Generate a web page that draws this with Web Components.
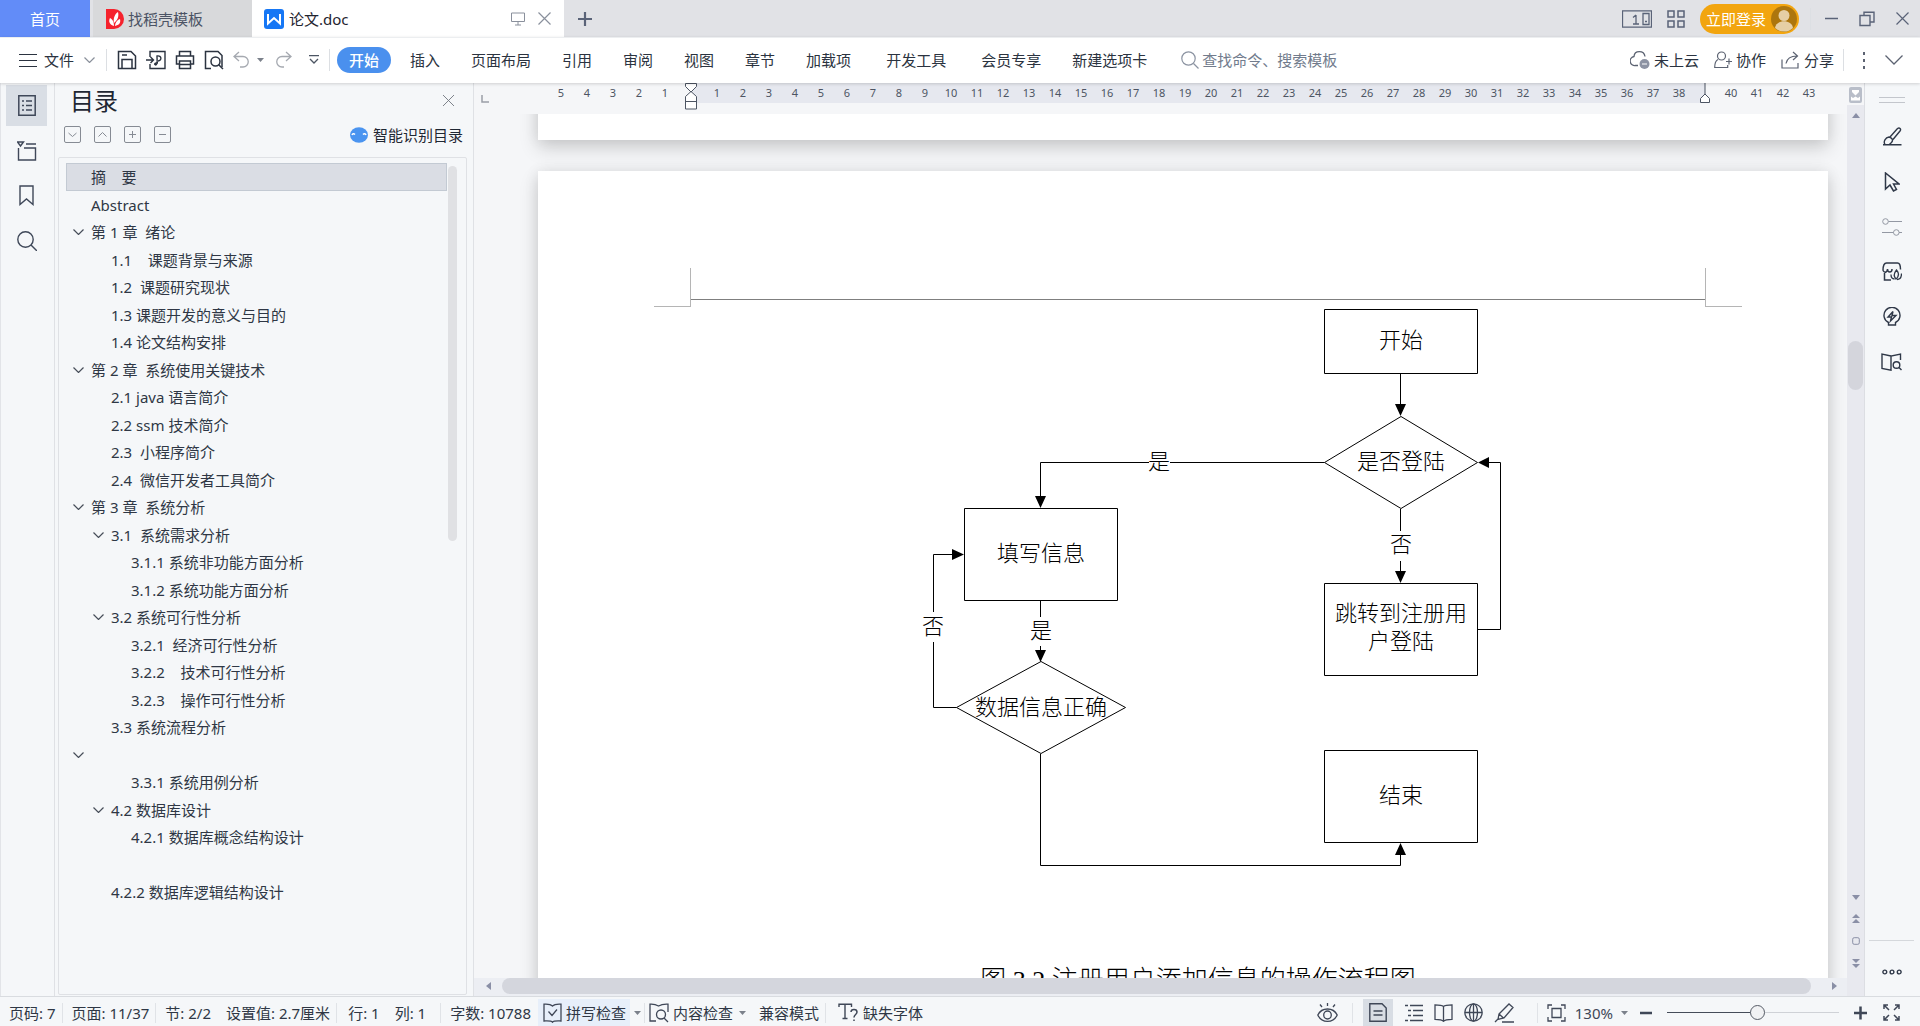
<!DOCTYPE html>
<html lang="zh-CN">
<head>
<meta charset="utf-8">
<title>论文.doc</title>
<style>
html,body{margin:0;height:100%}
body{font-family:"Noto Sans","Noto Sans CJK SC",sans-serif;font-size:15px;line-height:20px;color:#2b3340;background:#f5f7f9;overflow:hidden}
</style>
</head>
<body>
<writer-app></writer-app>
<script>
const base = `*{box-sizing:border-box}
button{all:unset;box-sizing:border-box;display:inline-flex;align-items:center;white-space:nowrap;cursor:pointer}
ui-icon{flex:none}
.sp{flex:1}`;
function define(name, css, html, setup){
  const t = document.createElement('template');
  t.innerHTML = `<style>${base}${css}</style>${html}`;
  customElements.define(name, class extends HTMLElement{
    connectedCallback(){
      if(this.shadowRoot) return;
      this.attachShadow({mode:'open'}).append(t.content.cloneNode(true));
      if(setup) setup(this, this.shadowRoot);
    }
  });
}
/* name: [width, height, drawing] ; strokes follow currentColor */
const icons = {
  docer:[19,20,'<path d="M1 0h8a10 10 0 0 1 0 20H1z" fill="#f5222d" stroke="none"/><path d="M9 17C3 15 4 11 5 9c2 1 4 3 4 8zM9 14c-1-5 1-9 4-11 1 4 0 8-4 11zM10 17c0-3 2-6 5-7 1 4-1 6-5 7z" fill="#fff" stroke="none"/>'],
  wps:[20,20,'<rect width="20" height="20" rx="3" fill="#1677f5" stroke="none"/><path d="M4 5v9.500l6-5.500 6 5.500V5" fill="none" stroke="#fff" stroke-width="2"/>'],
  monitor:[14,14,'<path d="M.5 1h13v8.500H.5zM7 9.500V13M4 13h6"/>'],
  x:[13,13,'<path d="M.5.5l12 12M12.500.5l-12 12" stroke-width="1.200"/>'],
  xs:[11,11,'<path d="M0 0l11 11M11 0L0 11" stroke-width=".9"/>'],
  plus:[16,16,'<path d="M8 1v14M1 8h14" stroke-width="2.2"/>'],
  split:[30,18,'<path d="M.5.8h29v16.400H.5zM21 3.500h6v11h-6zM23 11.500h2M14 5v9M11 14h6M14 5l-3 2.500" stroke-width="1.300"/>'],
  grid:[18,18,'<path d="M1 1h6v6H1zM11 1h6v6h-6zM1 11h6v6H1zM11 11h6v6h-6z" stroke-width="1.500"/>'],
  avatar:[26,26,'<circle cx="13" cy="13" r="13" fill="#ad760d" stroke="none"/><circle cx="13" cy="9.500" r="5.500" fill="#e6cfa5" stroke="none"/><path d="M4 22c1-9 17-9 18 0a13 13 0 0 1-18 0z" fill="#e6cfa5" stroke="none"/>'],
  min:[13,13,'<path d="M0 6.500h13" stroke-width="1.500"/>'],
  restore:[16,16,'<path d="M1 4.500h10v10H1zM5 4V1.200h10V11h-4" stroke-width="1.400"/>'],
  menu:[18,14,'<path d="M0 1.500h18M0 7.500h18M0 13.500h18" stroke-width="1.200"/>'],
  chev:[11,6,'<path d="M.5.5l5 5 5-5" stroke-width="1.200"/>'],
  chevbig:[18,10,'<path d="M.5.5L9 9l8.500-8.500" stroke-width="1.300"/>'],
  caret:[7,4,'<path d="M0 0h7L3.500 4z" fill="currentColor" stroke="none"/>'],
  save:[20,20,'<path d="M1.500 1.500H14L18.500 6v12.500h-17zM5 18V9.500h10V18M5 5h5" stroke-width="1.500"/>'],
  exp:[20,20,'<path d="M4 7V1.500h15v17H4V14M0 10h7M4.500 7L7.500 10l-3 3M9 15c3 0 2-4 2-9 5-1 5 5 1 5M9 15c-1-2 1-2 3-2" stroke-width="1.400"/>'],
  print:[20,20,'<path d="M4.500 6V1.500h11V6M4 14H1.500V6h17v8H16M4.500 11h11v7.500h-11zM4.500 14.500h11" stroke-width="1.500"/>'],
  preview:[20,20,'<path d="M7 18.500H1.500v-17H14l4 4V17" stroke-width="1.500"/><circle cx="11.500" cy="11.500" r="4.500" fill="#fff" stroke-width="1.500"/><path d="M14.500 14.500l4.500 4.500" stroke-width="1.500"/>'],
  undo:[17,17,'<path d="M6 1L1 5.500 6 10M1 5.500h9a5 5 0 0 1 0 10.500H7" stroke-width="1.300"/>'],
  redo:[17,17,'<path d="M11 1l5 4.500L11 10M16 5.500H7A5 5 0 0 0 7 16h2" stroke-width="1.300"/>'],
  more:[10,9,'<path d="M0 .7h10M1 4l4 4 4-4" stroke-width="1.300"/>'],
  search:[18,18,'<circle cx="7.500" cy="7.500" r="6.700" stroke-width="1.200"/><path d="M12.500 12.500L17.500 17.500" stroke-width="1.200"/>'],
  searchbig:[20,20,'<circle cx="8.500" cy="8.500" r="7.700" stroke-width="1.400"/><path d="M14 14l6 6" stroke-width="1.400"/>'],
  cloud:[20,20,'<path d="M8 15.500H5.500A4.500 4.500 0 0 1 4 6.500C4.500 0 14 0 15 6.500" stroke-width="1.300"/><circle cx="14.500" cy="14" r="5" fill="#8d93a3" stroke="none"/><path d="M12 14h5" stroke="#fff"/>'],
  coop:[18,18,'<path d="M4 8.500C1 10 .7 13 .7 16.500h13V14M12 10.500h6M15 7.500v6" stroke-width="1.200"/><circle cx="7.500" cy="5" r="4" stroke-width="1.200"/>'],
  share:[19,18,'<path d="M1 8.500v8.500h16v-5M5 12.500C6 7 10 5 16 5M12 1l4.500 4-4.500 4" stroke-width="1.200"/>'],
  dots:[4,18,'<path d="M2 1v3M2 8v3M2 15v3" stroke-width="2"/>'],
  outline:[18,21,'<path d="M.8.8h16.400v19.400H.8zM4 6h2M8 6h6M4 10.500h2M8 10.500h6M4 15h2M8 15h6" stroke-width="1.500"/>'],
  nav:[20,20,'<path d="M.5 1h6L3.500 5zM9 3h10M1.500 7v12h17V7H7" stroke-width="1.400"/>'],
  mark:[15,21,'<path d="M1 1h13v18.500l-6.500-5.500L1 19.500z" stroke-width="1.400"/>'],
  bdown:[17,17,'<rect x=".5" y=".5" width="16" height="16" rx="1.500"/><path d="M4.500 7l4 3.500 4-3.500"/>'],
  bup:[17,17,'<rect x=".5" y=".5" width="16" height="16" rx="1.500"/><path d="M4.500 10.500l4-4 4 4"/>'],
  bplus:[17,17,'<rect x=".5" y=".5" width="16" height="16" rx="1.500"/><path d="M5 8.500h7M8.500 5v7"/>'],
  bminus:[17,17,'<rect x=".5" y=".5" width="16" height="16" rx="1.500"/><path d="M5 8.500h7"/>'],
  smart:[18,16,'<ellipse cx="9" cy="8" rx="9" ry="7.700" fill="#4a94f0" stroke="none"/><path d="M2 8c.5-1.500 2-1.500 3-.5M13 7.500c1-1 2.500-1 3 .5" stroke="#fff" stroke-width="1.500"/>'],
  spell:[19,20,'<path d="M9.500 3C8 1.500 4 1 1 1.200V18c3 0 7-.5 8.500 1.200C11 17.500 15 18 18 18V1.200C15 1 11 1.500 9.500 3zM5.500 8.500l3.500 4 5-6" stroke-width="1.300"/>'],
  content:[20,20,'<path d="M7 18H1V1.200C4 1 7 1.500 9.500 3 12 1.500 15 1 19 1.200V9" stroke-width="1.300"/><circle cx="12" cy="11.500" r="4.500" stroke-width="1.300"/><path d="M15 15l4 4" stroke-width="1.300"/>'],
  font:[21,19,'<path d="M1 4V1.200h12.500V4M7 1.200v14.300M4.500 15.500h5" stroke-width="1.400"/><path d="M13 9c0-3.500 6-3.500 6 0 0 2.500-3 2.500-3 5.500M16 16.500v1.500" stroke-width="1.500"/>'],
  eye:[21,20,'<path d="M.8 12c4-8 15.400-8 19.400 0-4 8.500-15.400 8.500-19.400 0zM10.500 0v3M3 1.500l2 2.500M18 1.500L16 4" stroke-width="1.300"/><ellipse cx="10.500" cy="12" rx="3.800" ry="4" stroke-width="1.300"/>'],
  page:[18,19,'<path d="M.8.8H13L17.200 5v13.200H.8zM4.500 8h9M4.500 12h9" stroke-width="1.400"/>'],
  list:[19,18,'<path d="M1 1.500h3M6 1.500h13M4 6.500h3M9 6.500h10M4 11.500h3M9 11.500h10M1 16.500h3M6 16.500h13" stroke-width="1.500"/>'],
  book:[19,18,'<path d="M9.500 2.500C8 1 4 .8 1 .8v14.500c3 0 7 .2 8.500 2 1.500-1.800 5.500-2 8.500-2V.8c-3 0-7 .2-8.500 1.700zv15" stroke-width="1.300"/>'],
  globe:[19,19,'<g stroke-width="1.300"><circle cx="9.500" cy="9.500" r="8.700"/><ellipse cx="9.500" cy="9.500" rx="4" ry="8.700"/><path d="M1 9.500h17M9.500 1v17"/></g>'],
  pen:[21,20,'<path d="M5 11L15 1l4 3.500-9 10.500-6 1.500zM5 11l4.500 4M1 19l3-3M8 19h12" stroke-width="1.300"/>'],
  focus:[19,18,'<path d="M1 5V1h4M14 1h4v4M18 13v4h-4M5 17H1v-4M5 4.500h9v9H5z" stroke-width="1.300"/>'],
  minus:[12,14,'<path d="M0 7h12" stroke-width="2.500"/>'],
  plusb:[13,14,'<path d="M0 7h13M6.500 .5v13" stroke-width="2.500"/>'],
  full:[19,19,'<path d="M2 6V2h4M2 2l5 5M13 2h4v4M17 2l-5 5M2 13v4h4M2 17l5-5M17 13v4h-4M17 17l-5-5" stroke-width="1.500"/>'],
  handle:[26,6,'<path d="M0 .5h26M0 5.500h26" stroke="#c3c6cc"/>'],
  brush:[20,19,'<path d="M8 10L15.500 1.500c2-1.500 4 .5 2.500 2.500L11 12.500M3 17.500c-2-3 .5-7 4-7.500 3 .5 5 3.500 2 6l-2 1.700M1 17.800h18.500" stroke-width="1.400"/>'],
  cursor:[16,20,'<path d="M1.500 1v16L6 13l3.500 6 3-1.500L9.500 12h5.500z" stroke-width="1.500"/>'],
  slide:[20,18,'<circle cx="3.500" cy="3.500" r="2.800"/><path d="M6.500 3.500H20M0 14.500h11.500M17 14.500h3"/><circle cx="14.300" cy="14.500" r="2.800"/>'],
  shop:[20,19,'<path d="M9 18H2.500v-7M1 8.500C1 4 2 1 4.500 1h11c2 0 3 3 3 6.500M1 8.500c2 3.500 4.500 1 4.500-1.500 0 4 4.500 4 4.500 0" stroke-width="1.500"/><path d="M14 17c-3-3-2-6 .5-9 2.500 3 3 6-.5 9zM12.500 17c-3 0-3.500-3-3.500-4.500M15 17.500c3 0 4.500-2.500 4.500-6" stroke-width="1.300"/>'],
  bulb:[20,20,'<path d="M6.500 18v-2.500a8 8 0 1 1 7 0V18zM11 4.500L6 10h3.500L8.500 14 14 8.500h-4z" stroke-width="1.400"/>'],
  bookfind:[21,18,'<path d="M10 3L1 1v14.500l9 1.700V3l9.500-2v6" stroke-width="1.400"/><circle cx="15.500" cy="12" r="3.300" stroke-width="1.400"/><path d="M18 14.500l2.500 2.500" stroke-width="1.400"/>'],
  ooo:[20,6,'<g stroke-width="1.400"><circle cx="2.800" cy="3" r="1.900"/><circle cx="10" cy="3" r="1.900"/><circle cx="17.200" cy="3" r="1.900"/></g>'],
  up:[8,5,'<path d="M0 5L4 0l4 5z" fill="currentColor" stroke="none"/>'],
  down:[8,5,'<path d="M0 0l4 5 4-5z" fill="currentColor" stroke="none"/>'],
  left:[5,8,'<path d="M5 0L0 4l5 4z" fill="currentColor" stroke="none"/>'],
  right:[5,8,'<path d="M0 0l5 4-5 4z" fill="currentColor" stroke="none"/>'],
  dup:[8,9,'<path d="M0 4l4-4 4 4zM0 9l4-4 4 4z" fill="currentColor" stroke="none"/>'],
  ddown:[8,9,'<path d="M0 0l4 4 4-4zM0 5l4 4 4-4z" fill="currentColor" stroke="none"/>'],
  box:[8,8,'<rect x=".7" y=".7" width="6.600" height="6.600" rx="1.500"/>'],
  split2:[13,16,'<rect width="13" height="16" rx="2" fill="#b9bec9" stroke="none"/><path d="M3 3h7v2L6.500 8.500 3 5z" fill="#fff" stroke="none"/><path d="M2 9.500v4h9v-4L9 11 6.500 9.500 4 11z" fill="#fff" stroke="none"/>'],
  corner:[8,8,'<path d="M1 0v7h7" stroke-width="1.500"/>'],
  indent:[12,27,'<path d="M.5.5h11v3L6 9 .5 3.500zM6 8.500l5.500 5v12.500H.5V13.500zM.5 18.500h11" fill="#fff"/>'],
  rindent:[10,20,'<path d="M5 0v11"/><path d="M5 11l4.500 4.500v4h-9v-4z" fill="#fff"/>']
};
customElements.define('ui-icon', class extends HTMLElement{
  connectedCallback(){
    if(this.shadowRoot) return;
    const [w,h,d] = icons[this.getAttribute('name')];
    this.attachShadow({mode:'open'}).innerHTML =
      `<style>:host{display:inline-block;width:${w}px;height:${h}px}svg{display:block}</style><svg width="${w}" height="${h}" viewBox="0 0 ${w} ${h}" fill="none" stroke="currentColor" aria-hidden="true">${d}</svg>`;
  }
});

define('v-rule', ':host{display:block;flex:none;width:1px;height:22px;background:#dcdfe3}', '');

define('tab-bar', `
:host{display:flex;align-items:stretch;background:#e1e2e6;color:#5a6378;padding-right:11px}
.home{width:90px;justify-content:center;color:#fff;background:#628cf8;margin-right:3px}
.tab{display:flex;align-items:center}
.tpl{width:159px;padding-left:12px;gap:4px;background:#d8d9db;color:#4b5364}
.doc{width:312px;padding:0 13px 0 12px;gap:5px;background:#fff;color:#1f2530}
.doc .ctl{gap:13px;display:flex;align-items:center;color:#8a909c}
.new{margin-left:13px}
.right{display:flex;align-items:center;gap:15px}
.right v-rule{margin-left:-4px}
.login{width:99px;height:30px;border-radius:15px;background:#f2a50f;color:#fff;padding:0 2px 0 6px;justify-content:space-between}
.win{display:flex;align-items:center;gap:21px;margin-left:-1px}
`, `
<button class="home">首页</button>
<button class="tab tpl"><ui-icon name="docer"></ui-icon>找稻壳模板</button>
<div class="tab doc"><ui-icon name="wps"></ui-icon><span>论文.doc</span><span class="sp"></span><span class="ctl"><ui-icon name="monitor"></ui-icon><button aria-label="关闭"><ui-icon name="x"></ui-icon></button></span></div>
<button class="new" aria-label="新建"><ui-icon name="plus"></ui-icon></button>
<span class="sp"></span>
<div class="right"><ui-icon name="split"></ui-icon><ui-icon name="grid"></ui-icon>
<button class="login">立即登录<ui-icon name="avatar"></ui-icon></button><v-rule></v-rule>
<div class="win"><button aria-label="最小化"><ui-icon name="min"></ui-icon></button><button aria-label="还原"><ui-icon name="restore"></ui-icon></button><button aria-label="退出"><ui-icon name="x"></ui-icon></button></div></div>
`);

define('menu-bar', `
:host{display:flex;align-items:center;background:#fff;padding:0 17px 2px 19px;color:#2b3340;border-top:1px solid #eceef0;position:relative;z-index:1;box-shadow:0 1px 3px rgba(0,0,0,.16)}
.file{gap:7px;margin-right:11px}
.file .c{margin-left:3px;color:#8a909b}
.quick{display:flex;align-items:center;gap:9px;margin:0 9px 0 10px}
.hist{display:flex;align-items:center;color:#a5a9b0;margin-right:10px}
.hist .c{margin:0 11px 0 7px;color:#7b818b}
.hist .m{margin-left:17px;color:#4c5563}
nav{display:flex;align-items:center;gap:31px;margin-left:7px}
.on{background:#4a90ee;color:#fff;font-weight:500;height:26px;width:54px;justify-content:center;border-radius:13px;margin-right:-12px}
.wide{padding:0 4px}
label{display:flex;align-items:center;gap:3px;margin-left:34px;color:#8b93a1}
input{all:unset;width:150px;height:24px;font:inherit;color:#6f7887}
input::placeholder{color:#717b8c;opacity:1}
.right{display:flex;align-items:center;gap:15px}
.right button{gap:4px}
.right button ui-icon{color:#5c6372}
.right v-rule{margin-left:-6px}
.right .d{margin-left:3px}.right .e{margin-left:4px}
`, `
<button class="file"><ui-icon name="menu"></ui-icon>文件<ui-icon class="c" name="chev"></ui-icon></button><v-rule></v-rule>
<div class="quick"><button aria-label="保存"><ui-icon name="save"></ui-icon></button><button aria-label="输出"><ui-icon name="exp"></ui-icon></button><button aria-label="打印"><ui-icon name="print"></ui-icon></button><button aria-label="预览"><ui-icon name="preview"></ui-icon></button></div>
<div class="hist"><button aria-label="撤销"><ui-icon name="undo"></ui-icon></button><ui-icon class="c" name="caret"></ui-icon><button aria-label="恢复"><ui-icon name="redo"></ui-icon></button><button class="m" aria-label="更多"><ui-icon name="more"></ui-icon></button></div><v-rule></v-rule>
<nav><button class="on">开始</button><button>插入</button><button>页面布局</button><button>引用</button><button>审阅</button><button>视图</button><button>章节</button><button>加载项</button><button class="wide">开发工具</button><button>会员专享</button><button>新建选项卡</button></nav>
<label><ui-icon name="search"></ui-icon><input aria-label="查找" placeholder="查找命令、搜索模板"></label>
<span class="sp"></span>
<div class="right"><button><ui-icon name="cloud"></ui-icon>未上云</button><button><ui-icon name="coop"></ui-icon>协作</button><button><ui-icon name="share"></ui-icon>分享</button><v-rule></v-rule><button class="d" aria-label="菜单"><ui-icon name="dots"></ui-icon></button><button class="e" aria-label="折叠"><ui-icon name="chevbig"></ui-icon></button></div>
`);

define('side-rail', `
:host{display:flex;flex-direction:column;align-items:center;gap:4px;padding:2px 2px 0 0;border-left:1px solid #e2e4e8;border-right:1px solid #dfe1e5;color:#3f4859}
button{width:41px;height:41px;justify-content:center}
.on{background:#d9dee5}
`, `<button class="on" aria-label="目录"><ui-icon name="outline"></ui-icon></button><button aria-label="导航"><ui-icon name="nav"></ui-icon></button><button aria-label="书签"><ui-icon name="mark"></ui-icon></button><button aria-label="查找"><ui-icon name="searchbig"></ui-icon></button>`);

define('outline-item', `
:host{display:flex;align-items:center;height:27px;padding-left:7px;white-space:pre;border:1px solid transparent;border-left:0;line-height:18px}
:host(:nth-child(odd)){height:28px}
:host([level="1"]){padding-left:27px}
:host([level="2"]){padding-left:47px}
:host([selected]){background:#dadde4;border:1px solid #c3cad3;padding-left:6px}
.c{width:11px;height:6px;margin-right:7px;color:#474e5a}
.c ui-icon{display:none}
:host([open]) .c ui-icon{display:block}
`, `<button class="c" aria-label="展开"><ui-icon name="chev"></ui-icon></button><slot></slot>`, el => el.setAttribute('role','treeitem'));

define('outline-panel', `
:host{display:flex;flex-direction:column;border-right:1px solid #dfe1e5;padding:0 6px 1px 3px;color:#2f3745}
header{display:flex;align-items:center;justify-content:space-between;height:38px;padding:0 13px 3px 12px}
h2{margin:0;font-size:24px;font-weight:400;line-height:34px;color:#1f2733}
.x{color:#70757e}
.tools{display:flex;align-items:center;gap:13px;height:28px;padding:0 4px 1px 6px;color:#868b94}
.smart{gap:5px;color:#1f2733}
.list{flex:1;display:flex;margin-top:8px;border:1px solid #dfe1e5;border-radius:2px;padding:5px 9px 0 7px}
.tree{flex:1;margin-right:1px}
.bar{width:9px;height:375px;border-radius:5px;background:#e0e1e4;margin-top:3px}
`, `
<header><h2>目录</h2><button class="x" aria-label="关闭"><ui-icon name="xs"></ui-icon></button></header>
<div class="tools"><button aria-label="全部展开"><ui-icon name="bdown"></ui-icon></button><button aria-label="全部收起"><ui-icon name="bup"></ui-icon></button><button aria-label="展开"><ui-icon name="bplus"></ui-icon></button><button aria-label="收起"><ui-icon name="bminus"></ui-icon></button><span class="sp"></span><button class="smart"><ui-icon name="smart"></ui-icon>智能识别目录</button></div>
<div class="list"><div class="tree" role="tree"></div><div class="bar"></div></div>
`, (el, root) => {
  const rows = [[0,'摘    要','selected'],[0,'Abstract'],[0,'第 1 章  绪论','open'],[1,'1.1    课题背景与来源'],[1,'1.2  课题研究现状'],[1,'1.3 课题开发的意义与目的'],[1,'1.4 论文结构安排'],[0,'第 2 章  系统使用关键技术','open'],[1,'2.1 java 语言简介'],[1,'2.2 ssm 技术简介'],[1,'2.3  小程序简介'],[1,'2.4  微信开发者工具简介'],[0,'第 3 章  系统分析','open'],[1,'3.1  系统需求分析','open'],[2,'3.1.1 系统非功能方面分析'],[2,'3.1.2 系统功能方面分析'],[1,'3.2 系统可行性分析','open'],[2,'3.2.1  经济可行性分析'],[2,'3.2.2    技术可行性分析'],[2,'3.2.3    操作可行性分析'],[1,'3.3 系统流程分析'],[0,'','open'],[2,'3.3.1 系统用例分析'],[1,'4.2 数据库设计','open'],[2,'4.2.1 数据库概念结构设计'],[0,''],[1,'4.2.2 数据库逻辑结构设计']];
  root.querySelector('.tree').innerHTML = rows.map(([l,t,f]) => `<outline-item level="${l}" ${f||''}>${t}</outline-item>`).join('');
});

define('ruler-bar', `
:host{display:flex;align-items:flex-start;height:31px;padding-left:7px;font-size:11px;color:#4d5563;background:#f5f6f8;overflow:hidden}
.k{margin:12px 59px 0 0;color:#9a9ea6}
.t{flex:none;width:26px;height:20px;line-height:20px;text-align:center}
.in{background:#e6e8ef}
.z{background:linear-gradient(90deg,transparent 50%,#e6e8ef 50%)}
.e{background:linear-gradient(90deg,#e6e8ef 50%,transparent 50%)}
`, `<ui-icon class="k" name="corner"></ui-icon>`, (el, root) => {
  for(let i=-5;i<=43;i++){
    const s=document.createElement('span');
    s.className='t'+(i===0?' z':i===39?' e':i>0&&i<39?' in':'');
    if(i===0) s.innerHTML='<ui-icon name="indent"></ui-icon>';
    else if(i===39) s.innerHTML='<ui-icon name="rindent"></ui-icon>';
    else s.textContent=Math.abs(i);
    root.append(s);
  }
});

define('flow-chart', `
:host{display:block}
svg{display:block;margin:0 auto}
.l{fill:none;stroke:#000;stroke-width:1}
text{font-family:"Liberation Serif","Noto Sans CJK SC",serif;font-size:22px;font-weight:300;text-anchor:middle;fill:#000}
`, `
<svg width="1014" height="652" viewBox="691 300 1014 652" role="img" aria-label="流程图">
<g class="l">
<path d="M1324.500 309.500h153v64h-153zM1324.500 583.500h153v92h-153zM1324.500 750.500h153v92h-153zM964.500 508.500h153v92h-153z"/>
<path d="M1401 416.500l76.500 46-76.500 46-76.500-46zM1041 661.500l84.500 46-84.500 46-84.500-46z"/>
<path d="M1400.500 374v34M1400.500 509v22M1400.500 561v14M1477.500 629.500h23v-167H1488M1324.500 462.500H1170M1149 462.500H1040.500V500M1040.500 601v16M1040.500 646v8M956.500 707.500H933.500V642M933.500 612v-57.500H954M1040.500 754v111.500H1400.500V852"/>
</g>
<path d="M1395 404h11l-5.500 12zM1395 571h11l-5.500 12zM1489 457v11l-11-5.500zM1035 496h11l-5.500 12zM1035 650h11l-5.500 12zM952 549v11l12-5.500zM1395 855h11l-5.500-12z"/>
<text x="1401" y="348">开始</text><text x="1401" y="469">是否登陆</text><text x="1401" y="552">否</text>
<text x="1401" y="621">跳转到注册用</text><text x="1401" y="649">户登陆</text><text x="1401" y="803">结束</text>
<text x="1159" y="469">是</text><text x="1041" y="561">填写信息</text><text x="1041" y="638">是</text>
<text x="1041" y="715">数据信息正确</text><text x="933" y="634">否</text>
</svg>`);

define('doc-canvas', `
:host{display:flex;flex-direction:column;gap:31px;overflow:hidden;padding:0 19px 0 64px;background:#f5f6f8;min-height:0}
.paper{flex:none;background:#fff;box-shadow:0 8px 18px rgba(0,0,0,.16),0 0 14px rgba(0,0,0,.08)}
.prev{height:226px;margin-top:-200px}
.cur{padding:97px 123px 0 153px;height:900px}
.head{position:relative;height:32px;border-bottom:1px solid #7f7f7f}
.head i{position:absolute;top:0;width:37px;height:39px;border:0 solid #b5b5b5;border-bottom-width:1px}
.a{right:100%;border-right-width:1px!important}
.b{left:100%;border-left-width:1px!important}
p{margin:0;padding-top:10px;text-align:center;font:300 26px/38px "Liberation Serif","Noto Sans CJK SC",serif;color:#000}
`, `<section class="paper prev"></section>
<section class="paper cur"><div class="head"><i class="a"></i><i class="b"></i></div><flow-chart></flow-chart><p>图 3.2 注册用户添加信息的操作流程图</p></section>`);

define('h-scroll', `
:host{display:flex;align-items:center;height:18px;background:#eceef3;padding:0 10px 2px 12px;gap:11px;color:#8a8fa6}
.th{flex:1;height:16px;border-radius:8px;background:#d4d6dd}
.r{margin-left:10px}
`, `<ui-icon name="left"></ui-icon><div class="th"></div><ui-icon class="r" name="right"></ui-icon>`);

define('v-scroll', `
:host{display:flex;flex-direction:column;align-items:center;background:#e8e9ef;color:#8a8fa6;padding-bottom:28px}
.top{align-self:stretch;display:flex;justify-content:center;height:22px;padding-top:4px;margin-bottom:8px;background:#f5f6f8}
.th{width:15px;height:49px;border-radius:8px;background:#d4d5dc;margin-top:223px}
.end{display:flex;flex-direction:column;align-items:center;gap:14px}
`, `<div class="top"><ui-icon name="split2"></ui-icon></div><ui-icon name="up"></ui-icon><div class="th"></div><span class="sp"></span>
<div class="end"><ui-icon name="down"></ui-icon><ui-icon name="dup"></ui-icon><ui-icon name="box"></ui-icon><ui-icon name="ddown"></ui-icon></div>`);

define('tool-rail', `
:host{display:flex;flex-direction:column;align-items:center;border-left:1px solid #dcdee3;padding:14px 2px 0 0;color:#2f3848}
.h{margin-bottom:11px}
button{width:41px;height:45px;justify-content:center}
.dim{color:#9398a3}
hr{width:45px;border:0;border-top:1px solid #d5d8dc;margin:0 0 28px}
.o{margin-bottom:21px}
`, `<ui-icon class="h" name="handle"></ui-icon>
<button aria-label="画笔"><ui-icon name="brush"></ui-icon></button><button aria-label="选择"><ui-icon name="cursor"></ui-icon></button><button class="dim" aria-label="设置"><ui-icon name="slide"></ui-icon></button><button aria-label="素材"><ui-icon name="shop"></ui-icon></button><button aria-label="推荐"><ui-icon name="bulb"></ui-icon></button><button aria-label="检索"><ui-icon name="bookfind"></ui-icon></button>
<span class="sp"></span><hr><ui-icon class="o" name="ooo"></ui-icon>`);

define('status-bar', `
:host{display:flex;align-items:center;border-top:1px solid #d9dce0;padding:2px 19px 0 9px;white-space:nowrap;color:#2f3745}
v-rule{height:20px;margin:0 9px 0 6px;background:#e0e3e7}
.n{margin-left:15px}
.v1{margin-right:11px}
.v2{margin-left:14px}
.v3{margin:0 4px 0 3px}
.v4{margin-left:14px}
button{height:27px;gap:4px}
button ui-icon{color:#3f4757}
.c{color:#7b818b!important}
.hl{background:#e7effa;padding-left:5px;width:92px;margin:0 4px 0 7px}
.k{gap:6px}.k span{display:flex;align-items:center;gap:4px}
.m{margin-left:13px}
.f{margin-left:3px}
.right{display:flex;align-items:center;color:#3f4757}
.views{display:flex;align-items:center;gap:11px;margin-right:16px}
.on{background:#d8dde4;width:30px;justify-content:center;margin-left:1px}
.z{margin-right:12px;gap:9px;color:#3f4757}
.z .c{margin-left:-1px}
input{-webkit-appearance:none;appearance:none;width:172px;height:20px;margin:0 15px;background:linear-gradient(90deg,#454c59 53%,#cfd2d7 53%) center/100% 1px no-repeat}
input::-webkit-slider-thumb{-webkit-appearance:none;width:15px;height:15px;border-radius:50%;background:#f1f2f4;border:1px solid #555b66}
.fs{margin-left:15px}
`, `
<span>页码: 7</span><v-rule></v-rule><span>页面: 11/37</span><v-rule></v-rule><span>节: 2/2</span><span class="n">设置值: 2.7厘米</span><v-rule class="v1"></v-rule><span>行: 1</span><span class="n">列: 1</span><v-rule class="v2"></v-rule><span>字数: 10788</span>
<button class="hl"><ui-icon name="spell"></ui-icon>拼写检查</button><button aria-label="拼写选项"><ui-icon class="c" name="caret"></ui-icon></button><v-rule class="v3"></v-rule>
<button class="k"><span><ui-icon name="content"></ui-icon>内容检查</span><ui-icon class="c" name="caret"></ui-icon></button>
<button class="m">兼容模式</button><v-rule></v-rule>
<button class="f"><ui-icon name="font"></ui-icon>缺失字体</button>
<span class="sp"></span>
<div class="right"><button aria-label="护眼"><ui-icon name="eye"></ui-icon></button><v-rule class="v4"></v-rule>
<div class="views"><button class="on" aria-label="页面视图"><ui-icon name="page"></ui-icon></button><button aria-label="大纲"><ui-icon name="list"></ui-icon></button><button aria-label="阅读"><ui-icon name="book"></ui-icon></button><button aria-label="网页"><ui-icon name="globe"></ui-icon></button><button aria-label="写作"><ui-icon name="pen"></ui-icon></button></div>
<v-rule></v-rule><button class="z"><ui-icon name="focus"></ui-icon>130%<ui-icon class="c" name="caret"></ui-icon></button>
<button aria-label="缩小"><ui-icon name="minus"></ui-icon></button><input type="range" min="0" max="100" value="53" aria-label="缩放"><button aria-label="放大"><ui-icon name="plusb"></ui-icon></button><button class="fs" aria-label="全屏"><ui-icon name="full"></ui-icon></button></div>`);

define('writer-app', `
:host{display:grid;grid-template-rows:37px 46px minmax(0,1fr) 30px;height:100vh}
main{display:grid;grid-template-columns:55px 419px minmax(0,1fr) 17px 56px;min-height:0}
.ed{display:grid;grid-template-rows:31px minmax(0,1fr) 18px;min-height:0;min-width:0}
`, `<tab-bar></tab-bar><menu-bar></menu-bar>
<main><side-rail></side-rail><outline-panel></outline-panel><div class="ed"><ruler-bar></ruler-bar><doc-canvas></doc-canvas><h-scroll></h-scroll></div><v-scroll></v-scroll><tool-rail></tool-rail></main>
<status-bar></status-bar>`);
</script>
</body>
</html>
